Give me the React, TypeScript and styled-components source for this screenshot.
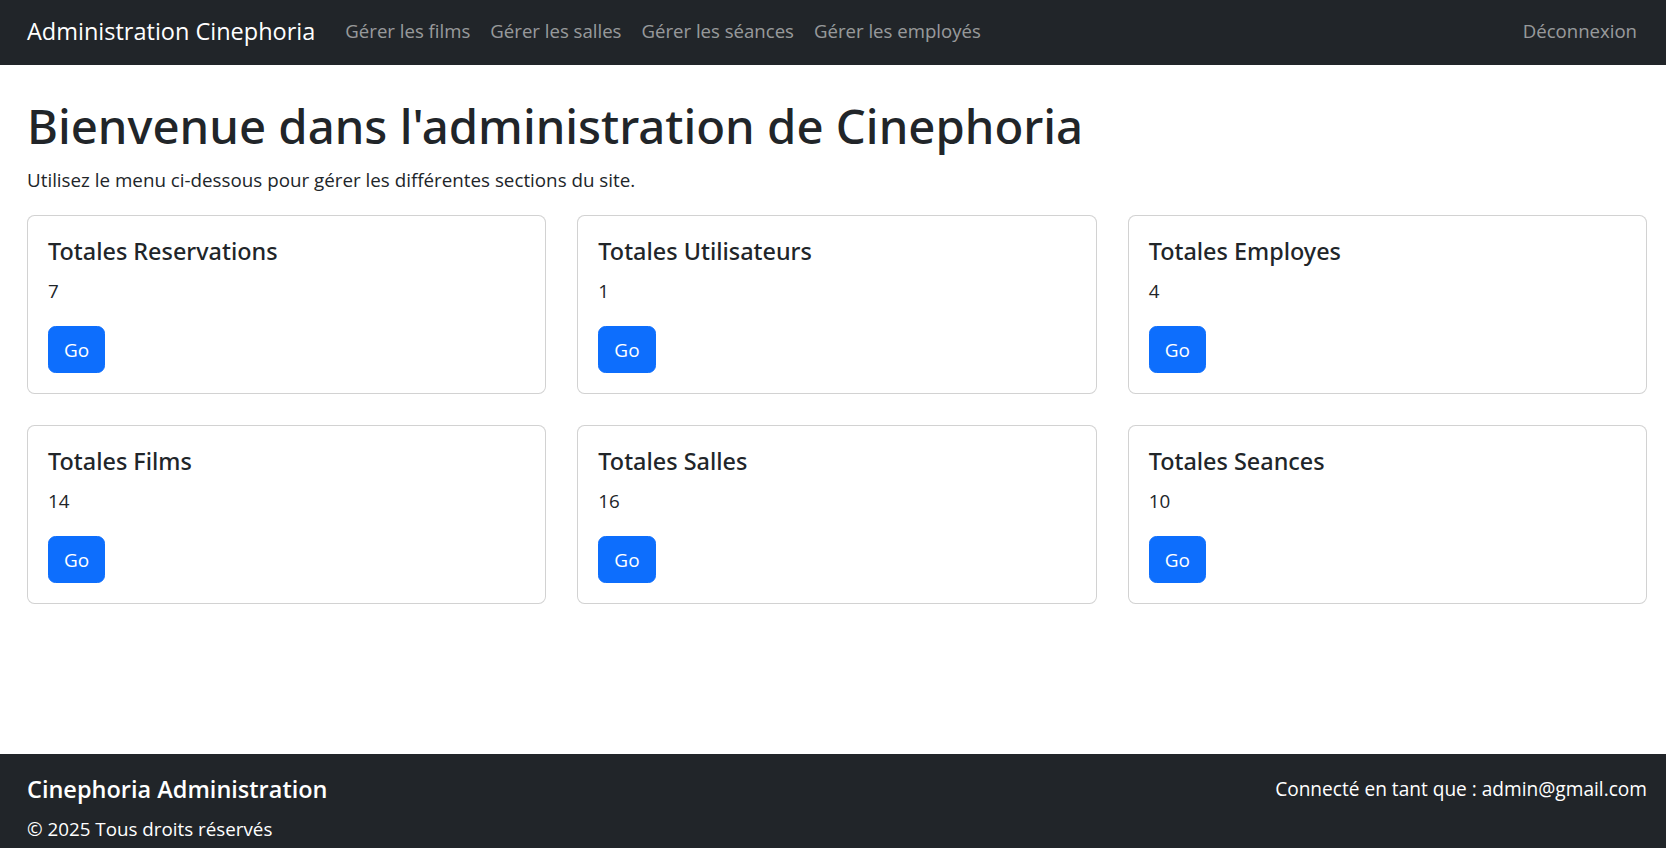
import React from "react";
import styled, { createGlobalStyle } from "styled-components";

const GlobalStyle = createGlobalStyle`
  *, *::before, *::after { box-sizing: border-box; }
  html, body { margin: 0; padding: 0; }
  body {
    font-family: "Open Sans", "Noto Sans", sans-serif;
    font-size: 18.8px;
    line-height: 30px;
    color: #212529;
    background: #ffffff;
  }
  h1, h5, p { margin: 0; }
`;

const Page = styled.div`
  display: flex;
  flex-direction: column;
  min-height: 100vh;
`;

const NavBar = styled.nav`
  display: flex;
  align-items: center;
  height: 65px;
  padding: 0 19px 3px 27px;
  background: #212529;
`;

const Brand = styled.a`
  font-size: 23.5px;
  line-height: 30px;
  color: #ffffff;
  text-decoration: none;
  margin-right: 20px;
  white-space: nowrap;
`;

const NavList = styled.div`
  display: flex;
  align-items: center;
  flex: 1;
`;

const NavLink = styled.a<{ $right?: boolean }>`
  font-size: 18.6px;
  line-height: 30px;
  padding: 0 10px;
  color: rgba(255, 255, 255, 0.55);
  text-decoration: none;
  white-space: nowrap;
  margin-left: ${(p) => (p.$right ? "auto" : "0")};
`;

const Main = styled.main`
  min-height: 689px;
  padding: 31px 19px 0 27px;
`;

const Title = styled.h1`
  font-family: "Noto Sans", "Open Sans", sans-serif;
  font-size: 47.3px;
  line-height: 60px;
  font-weight: 500;
  margin-bottom: 9px;
  white-space: nowrap;
`;

const Lead = styled.p`
  margin-bottom: 20px;
`;

const CardGrid = styled.div`
  display: grid;
  grid-template-columns: repeat(3, 1fr);
  gap: 31px;
`;

const Card = styled.div`
  border: 1px solid rgba(0, 0, 0, 0.175);
  border-radius: 7.5px;
  padding: 20px;
  background: #ffffff;
`;

const CardTitle = styled.h5`
  font-family: "Noto Sans", "Open Sans", sans-serif;
  font-size: 23.4px;
  line-height: 30px;
  font-weight: 500;
  margin-bottom: 10px;
`;

const CardValue = styled.p`
  margin-bottom: 20px;
`;

const GoButton = styled.button`
  display: inline-block;
  font-family: inherit;
  font-size: 19px;
  line-height: 30px;
  padding: 7.5px 15px;
  border: 1px solid #0d6efd;
  border-radius: 7.5px;
  background: #0d6efd;
  color: #ffffff;
  cursor: pointer;
`;

const Footer = styled.footer`
  display: flex;
  justify-content: space-between;
  align-items: flex-start;
  padding: 20px 19px 20px 27px;
  background: #212529;
  color: #ffffff;
`;

const FooterTitle = styled.h5`
  font-size: 23.5px;
  line-height: 30px;
  font-weight: 600;
  margin-bottom: 10px;
`;

const FooterUser = styled.p`
  font-size: 19.1px;
`;

const navItems = ["Gérer les films", "Gérer les salles", "Gérer les séances", "Gérer les employés"];

const stats = [
  { label: "Totales Reservations", value: 7 },
  { label: "Totales Utilisateurs", value: 1 },
  { label: "Totales Employes", value: 4 },
  { label: "Totales Films", value: 14 },
  { label: "Totales Salles", value: 16 },
  { label: "Totales Seances", value: 10 },
];

export default function App() {
  return (
    <Page>
      <GlobalStyle />
      <NavBar>
        <Brand href="#">Administration Cinephoria</Brand>
        <NavList>
          {navItems.map((item) => (
            <NavLink key={item} href="#">
              {item}
            </NavLink>
          ))}
          <NavLink $right href="#">
            Déconnexion
          </NavLink>
        </NavList>
      </NavBar>
      <Main>
        <Title>Bienvenue dans l'administration de Cinephoria</Title>
        <Lead>Utilisez le menu ci-dessous pour gérer les différentes sections du site.</Lead>
        <CardGrid>
          {stats.map((s) => (
            <Card key={s.label}>
              <CardTitle>{s.label}</CardTitle>
              <CardValue>{s.value}</CardValue>
              <GoButton>Go</GoButton>
            </Card>
          ))}
        </CardGrid>
      </Main>
      <Footer>
        <div>
          <FooterTitle>Cinephoria Administration</FooterTitle>
          <p>© 2025 Tous droits réservés</p>
        </div>
        <FooterUser>Connecté en tant que : admin@gmail.com</FooterUser>
      </Footer>
    </Page>
  );
}
